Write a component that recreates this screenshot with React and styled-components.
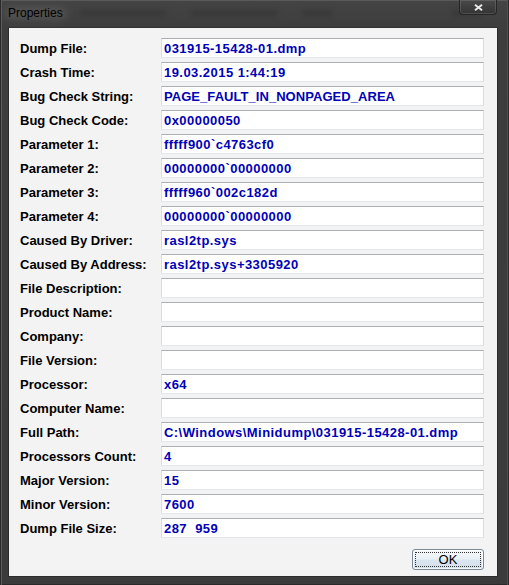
import React from "react";
import styled, { createGlobalStyle } from "styled-components";

const Global = createGlobalStyle`
  html, body { margin: 0; padding: 0; background: #333; }
  body { font-family: "Liberation Sans", Arial, sans-serif; }
`;

const Window = styled.div`
  position: relative;
  width: 509px;
  height: 585px;
  box-sizing: border-box;
  display: flex;
  flex-direction: column;
  background: linear-gradient(180deg, #444 0px, #3d3d3d 30px, #3b3b3b 100%);
  box-shadow: inset 1px 0 0 #2a2a2a, inset 2px 0 0 #5c5c5c, inset -1px 0 0 #2a2a2a,
    inset -2px 0 0 #505050, inset 0 1px 0 #5a5a5a, inset 0 -1px 0 #2a2a2a;
`;

const TitleBar = styled.div`
  position: relative;
  height: 27px;
  flex: none;
  display: flex;
  align-items: flex-start;
  padding-left: 8px;
`;

const Ghosts = styled.div`
  position: absolute;
  left: 80px;
  top: 10px;
  display: flex;
  gap: 25px;
  filter: blur(2px);
  pointer-events: none;
`;

const Ghost = styled.span`
  display: block;
  width: ${(p) => p.$w}px;
  height: 6px;
  margin-left: ${(p) => p.$ml || 0}px;
  background: #303030;
  opacity: 0.45;
`;

const Title = styled.span`
  position: relative;
  z-index: 0;
  margin-top: 6px;
  font-family: "Liberation Sans", Arial, sans-serif;
  font-size: 12px;
  color: #000;

  &::before {
    content: "";
    position: absolute;
    inset: 2px -3px 1px -3px;
    background: rgba(110, 110, 110, 0.45);
    filter: blur(4px);
    border-radius: 8px;
    z-index: -1;
  }
`;

const CloseBtn = styled.div`
  position: absolute;
  right: 12px;
  top: 0;
  width: 38px;
  height: 15px;
  box-sizing: border-box;
  border: 1px solid #262626;
  border-top: none;
  border-radius: 0 0 4px 4px;
  background: linear-gradient(180deg, #4a4a4a 0%, #3e3e3e 50%, #353535 100%);
  box-shadow: inset 0 0 0 1px rgba(255, 255, 255, 0.12);
  display: flex;
  align-items: center;
  justify-content: center;
`;

const Client = styled.div`
  flex: 1;
  margin: 0 11px 9px 8px;
  background: #f3f3f3;
  border: 1px solid #2b2b2b;
  border-top-color: #333;
  box-sizing: border-box;
  padding: 10px 13px 6px 11px;
  display: flex;
  flex-direction: column;
`;

const Grid = styled.div`
  display: grid;
  grid-template-columns: 141px 1fr;
  grid-auto-rows: 20px;
  row-gap: 4px;
`;

const Label = styled.div`
  display: flex;
  align-items: center;
  font-family: "Liberation Sans", Arial, sans-serif;
  font-weight: bold;
  font-size: 13px;
  color: #000;
  white-space: nowrap;
`;

const Field = styled.div`
  display: flex;
  align-items: center;
  box-sizing: border-box;
  height: 20px;
  background: #fff;
  border: 1px solid;
  border-color: #acaeb4 #d9dce1 #e3e6ea #d9dce1;
  padding-left: 2px;
  font-family: "Liberation Sans", Arial, sans-serif;
  font-weight: bold;
  font-size: 13px;
  letter-spacing: ${(p) => (p.$tight ? "0.05px" : "0.45px")};
  color: #0000b8;
  white-space: nowrap;
  overflow: hidden;
`;

const Footer = styled.div`
  display: flex;
  justify-content: flex-end;
  margin-top: 11px;
`;

const Button = styled.button`
  position: relative;
  width: 72px;
  height: 21px;
  box-sizing: border-box;
  border: 1px solid #7a8a99;
  border-radius: 3px;
  background: linear-gradient(180deg, #f5f8fb 0%, #eaf1f6 45%, #dae6ef 55%, #d3e1eb 100%);
  box-shadow: inset 0 0 0 1px rgba(255, 255, 255, 0.7);
  font-family: "Liberation Sans", Arial, sans-serif;
  font-size: 13px;
  color: #000;
  padding: 0;
  display: flex;
  align-items: center;
  justify-content: center;

  &::after {
    content: "";
    position: absolute;
    inset: 2px;
    border: 1px dotted #333;
    border-radius: 1px;
  }
`;

const rows = [
  ["Dump File:", "031915-15428-01.dmp"],
  ["Crash Time:", "19.03.2015 1:44:19"],
  ["Bug Check String:", "PAGE_FAULT_IN_NONPAGED_AREA", true],
  ["Bug Check Code:", "0x00000050"],
  ["Parameter 1:", "fffff900`c4763cf0"],
  ["Parameter 2:", "00000000`00000000"],
  ["Parameter 3:", "fffff960`002c182d"],
  ["Parameter 4:", "00000000`00000000"],
  ["Caused By Driver:", "rasl2tp.sys"],
  ["Caused By Address:", "rasl2tp.sys+3305920"],
  ["File Description:", ""],
  ["Product Name:", ""],
  ["Company:", ""],
  ["File Version:", ""],
  ["Processor:", "x64"],
  ["Computer Name:", ""],
  ["Full Path:", "C:\\Windows\\Minidump\\031915-15428-01.dmp"],
  ["Processors Count:", "4"],
  ["Major Version:", "15"],
  ["Minor Version:", "7600"],
  ["Dump File Size:", "287\u00a0\u00a0959"],
];

export default function App() {
  return (
    <>
      <Global />
      <Window>
        <TitleBar>
          <Ghosts>
            <Ghost $w={86} />
            <Ghost $w={86} />
            <Ghost $w={30} />
            <Ghost $w={30} $ml={95} />
          </Ghosts>
          <Title>Properties</Title>
          <CloseBtn>
            <svg width="9" height="7" viewBox="0 0 9 7">
              <path d="M1 0.8 L8 6.2 M8 0.8 L1 6.2" stroke="#e8e8e8" strokeWidth="2" />
            </svg>
          </CloseBtn>
        </TitleBar>
        <Client>
          <Grid>
            {rows.map(([label, value, tight]) => (
              <React.Fragment key={label}>
                <Label>{label}</Label>
                <Field $tight={tight}>{value}</Field>
              </React.Fragment>
            ))}
          </Grid>
          <Footer>
            <Button>OK</Button>
          </Footer>
        </Client>
      </Window>
    </>
  );
}
